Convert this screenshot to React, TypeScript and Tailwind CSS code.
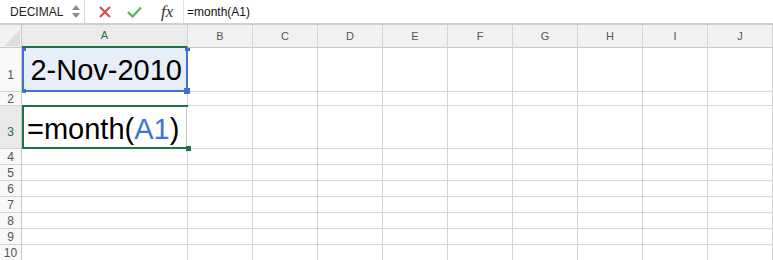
import React from "react";

const COLS = ["B", "C", "D", "E", "F", "G", "H", "I", "J"];

const ROWS = [
  { n: 1, h: "h-[44px]", tall: true },
  { n: 2, h: "h-[14px]", tall: false },
  { n: 3, h: "h-[43px]", tall: true },
  { n: 4, h: "h-[16px]", tall: false },
  { n: 5, h: "h-[16px]", tall: false },
  { n: 6, h: "h-[16px]", tall: false },
  { n: 7, h: "h-[16px]", tall: false },
  { n: 8, h: "h-[16px]", tall: false },
  { n: 9, h: "h-[16px]", tall: false },
  { n: 10, h: "h-[16px]", tall: false },
];

const GREEN = "#217346";

function FormulaBar() {
  return (
    <div className="flex h-[25px] items-center border-b-2 border-[#cfcfcf] bg-white">
      <div className="flex h-full w-[85px] items-center border-r border-[#d6d6d6] pl-[10px]">
        <span className="flex-1 text-[12px] text-[#222]">DECIMAL</span>
        <div className="mr-[4px] flex flex-col items-center gap-[3px]">
          <svg width="8" height="5" viewBox="0 0 8 5">
            <path d="M4 0 L8 5 L0 5 Z" fill="#8a8a8a" />
          </svg>
          <svg width="8" height="5" viewBox="0 0 8 5">
            <path d="M0 0 L8 0 L4 5 Z" fill="#8a8a8a" />
          </svg>
        </div>
      </div>
      <div className="flex h-full w-[99px] items-center border-r border-[#e2e2e2]">
        <svg width="12" height="12" viewBox="0 0 12 12" className="ml-[14px]">
          <path d="M1 1 L11 11 M11 1 L1 11" stroke="#e04b4b" strokeWidth="2.2" />
        </svg>
        <svg width="15" height="12" viewBox="0 0 15 12" className="ml-[16px]">
          <path d="M1 6 L5.5 10.5 L14 1.5" stroke="#5cb85c" strokeWidth="2.4" fill="none" />
        </svg>
        <span
          className="ml-[19px] text-[17px] italic leading-none text-[#333]"
          style={{ fontFamily: '"Liberation Serif", serif' }}
        >
          fx
        </span>
      </div>
      <span className="pl-[3px] text-[12px] text-[#111]">=month(A1)</span>
    </div>
  );
}

function Header() {
  return (
    <>
      <div className="relative h-[23px] border-r border-b border-[#c8c8c8] bg-[#f1f1f1]">
        <svg width="16" height="16" viewBox="0 0 16 16" className="absolute right-[1px] bottom-[1px]">
          <path d="M16 0 L16 16 L0 16 Z" fill="#dddddd" />
        </svg>
      </div>
      <div className="flex h-[23px] items-center justify-center border-r border-b-2 border-r-[#d4d4d4] border-b-[#217346] bg-[#ebebeb] text-[11px] text-[#217346]">
        A
      </div>
      {COLS.map((c) => (
        <div
          key={c}
          className="flex h-[23px] items-center justify-center border-r border-b border-r-[#d4d4d4] border-b-[#c8c8c8] bg-[#f1f1f1] text-[11px] text-[#555]"
        >
          {c}
        </div>
      ))}
    </>
  );
}

function CellA1() {
  return (
    <div className="relative flex h-[44px] items-end justify-end border-r border-b border-[#d4d4d4] bg-[#e8eef9] pr-[5px] pb-[6px]">
      <span className="text-[29px] leading-none text-black">2-Nov-2010</span>
      <div className="absolute top-0 left-0 -right-[1px] -bottom-[1px] border-2 border-t-0 border-[#3b74d1]" />
      <div className="absolute top-0 left-0 h-[3px] w-[4px] bg-[#3b74d1]" />
      <div className="absolute top-0 -right-[3px] h-[3px] w-[5px] bg-[#3b74d1]" />
      <div className="absolute -bottom-[2px] left-0 h-[4px] w-[4px] bg-[#3b74d1]" />
      <div className="absolute -right-[3px] -bottom-[3px] h-[6px] w-[6px] bg-[#3b74d1]" />
    </div>
  );
}

function CellA3() {
  return (
    <div className="relative flex h-[43px] items-end border-b border-[#d4d4d4] pl-[5px] pb-[4px]">
      <span className="text-[29px] leading-none text-black">
        =month(<span className="text-[#3b74d1]">A1</span>)
      </span>
      <div className="absolute -top-[1px] left-0 right-0 -bottom-[1px] border-2 border-r-0 border-[#217346]" />
      <div className="absolute top-[1px] right-[1px] bottom-[1px] w-px bg-[#c4c4c4]" />
      <div className="absolute -right-[3px] -bottom-[3px] h-[5px] w-[5px] bg-[#217346]" />
    </div>
  );
}

export default function App() {
  return (
    <div
      className="h-[260px] w-[773px] overflow-hidden bg-white"
      style={{ fontFamily: '"Liberation Sans", Arial, sans-serif' }}
    >
      <FormulaBar />
      <div className="grid grid-cols-[22px_166px_repeat(9,65px)]">
        <Header />
        {ROWS.map((r) => (
          <React.Fragment key={r.n}>
            <div
              className={`flex ${r.h} justify-center border-r border-b border-r-[#c8c8c8] border-b-[#d4d4d4] text-[12px] leading-none ${
                r.tall ? "items-end pb-[10px]" : "items-center"
              } ${r.n === 3 ? "bg-[#e9e9e9] text-[#217346]" : "bg-[#f8f8f8] text-[#555]"}`}
            >
              {r.n}
            </div>
            {r.n === 1 ? (
              <CellA1 />
            ) : r.n === 3 ? (
              <CellA3 />
            ) : (
              <div className={`${r.h} border-r border-b border-[#d4d4d4]`} />
            )}
            {COLS.map((c) => (
              <div key={c} className={`${r.h} border-r border-b border-[#d4d4d4]`} />
            ))}
          </React.Fragment>
        ))}
      </div>
    </div>
  );
}
